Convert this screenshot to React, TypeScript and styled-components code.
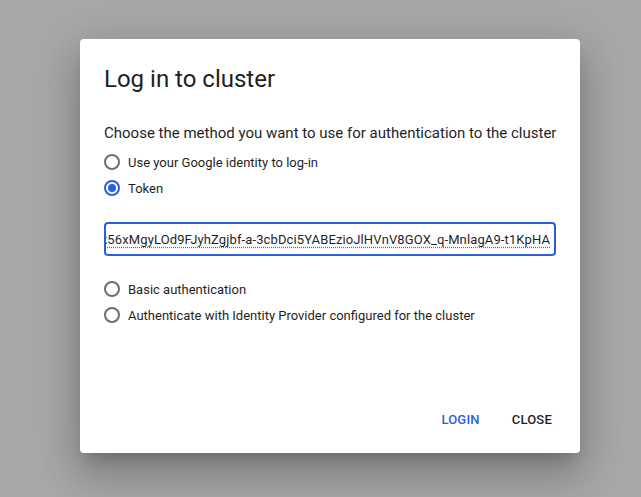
import React from "react";
import styled, { createGlobalStyle } from "styled-components";

const Global = createGlobalStyle`
  html, body { margin: 0; padding: 0; }
  body { font-family: Roboto, "Liberation Sans", Arial, sans-serif; background: #a8a8a8; }
`;

const Overlay = styled.div`
  width: 641px;
  height: 497px;
  box-sizing: border-box;
  padding: 39px 0 0 80px;
  background: #a8a8a8;
  overflow: hidden;
`;

const Dialog = styled.div`
  width: 500px;
  height: 414px;
  box-sizing: border-box;
  background: #fff;
  border-radius: 4px;
  padding: 24px 24px 17px 24px;
  display: flex;
  flex-direction: column;
  box-shadow: 0 11px 15px -7px rgba(0,0,0,0.2), 0 24px 38px 3px rgba(0,0,0,0.14), 0 9px 46px 8px rgba(0,0,0,0.12);
`;

const Title = styled.h2`
  margin: 0;
  font-size: 24px;
  font-weight: 400;
  line-height: 32px;
  color: #1f1f1f;
`;

const Prompt = styled.p`
  margin: 27px 0 0 0;
  font-size: 15px;
  line-height: 22px;
  color: #1f1f1f;
  white-space: nowrap;
`;

const RadioRow = styled.label`
  display: flex;
  align-items: center;
  gap: 8px;
  height: 26px;
  font-size: 13px;
  color: #1f1f1f;
`;

const Circle = styled.span<{ $checked?: boolean }>`
  width: 16px;
  height: 16px;
  box-sizing: border-box;
  border-radius: 50%;
  border: 2px solid ${p => (p.$checked ? "#2b5fd9" : "#6e6e6e")};
  display: flex;
  align-items: center;
  justify-content: center;
  &::after {
    content: "";
    width: 8px;
    height: 8px;
    border-radius: 50%;
    background: ${p => (p.$checked ? "#2b5fd9" : "transparent")};
  }
`;

const Group = styled.div<{ $top?: number }>`
  display: flex;
  flex-direction: column;
  margin-top: ${p => p.$top ?? 0}px;
`;

const TokenBox = styled.div`
  margin: 21px 0 20px 0;
  height: 34px;
  box-sizing: border-box;
  border: 2px solid #2b5fd9;
  border-radius: 4px;
  display: flex;
  align-items: center;
  justify-content: flex-end;
  padding: 0 4px 0 2px;
  overflow: hidden;
  white-space: nowrap;
  font-size: 13px;
  letter-spacing: 0.12px;
  color: #1f1f1f;
`;

const TokenText = styled.span`
  text-decoration: underline dotted #e53935;
  text-underline-offset: 3px;
`;

const Spacer = styled.div`
  flex: 1;
`;

const Actions = styled.div`
  display: flex;
  justify-content: flex-end;
  gap: 8px;
`;

const Button = styled.button<{ $primary?: boolean }>`
  border: none;
  background: none;
  font-family: Roboto, "Liberation Sans", Arial, sans-serif;
  font-size: 13px;
  line-height: 16px;
  font-weight: 500;
  letter-spacing: 0.2px;
  text-transform: uppercase;
  color: ${p => (p.$primary ? "#2b5fd9" : "#1f1f1f")};
  padding: 8px 4px 8px 20px;
  cursor: pointer;
`;

export default function App() {
  return (
    <>
      <Global />
      <Overlay>
        <Dialog>
          <Title>Log in to cluster</Title>
          <Prompt>Choose the method you want to use for authentication to the cluster</Prompt>
          <Group $top={5}>
            <RadioRow><Circle />Use your Google identity to log-in</RadioRow>
            <RadioRow><Circle $checked />Token</RadioRow>
          </Group>
          <TokenBox>
            <TokenText>eyJhbGciOiJSUzI1NiIsImtpZCI6Ijk56xMgyLOd9FJyhZgjbf-a-3cbDci5YABEzioJlHVnV8GOX_q-MnlagA9-t1KpHA</TokenText>
          </TokenBox>
          <Group>
            <RadioRow><Circle />Basic authentication</RadioRow>
            <RadioRow><Circle />Authenticate with Identity Provider configured for the cluster</RadioRow>
          </Group>
          <Spacer />
          <Actions>
            <Button $primary>Login</Button>
            <Button>Close</Button>
          </Actions>
        </Dialog>
      </Overlay>
    </>
  );
}
